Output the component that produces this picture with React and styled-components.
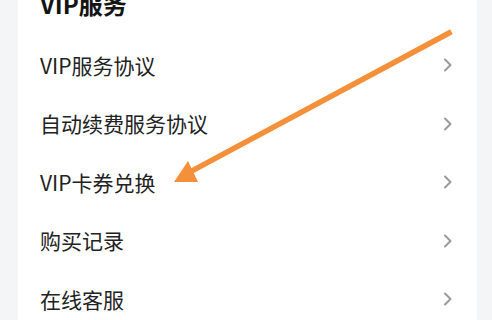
import React from "react";
import styled, { createGlobalStyle } from "styled-components";

const Global = createGlobalStyle`
  html, body { margin: 0; padding: 0; background: #f4f5f7; overflow: hidden; }
  body { font-family: "Noto Sans CJK SC", "Noto Sans", sans-serif; }
`;

const Page = styled.div`
  position: relative;
  width: 492px;
  height: 320px;
  overflow: hidden;
  background: #f4f5f7;
  padding: 0 15px 0 18px;
  box-sizing: border-box;
`;

const Card = styled.section`
  background: #ffffff;
  margin-top: -29px;
  display: flex;
  flex-direction: column;
`;

const Title = styled.h2`
  margin: 0;
  padding: 0 0 0 22px;
  height: 65px;
  display: flex;
  align-items: center;
  font-size: 24px;
  font-weight: 700;
  color: #141414;
  line-height: 1;
`;

const Row = styled.div`
  height: 58.5px;
  display: flex;
  align-items: center;
  justify-content: space-between;
  padding: 0 24px 0 22px;
`;

const Label = styled.span`
  font-size: 21px;
  color: #222222;
  line-height: 1;
`;

const Chevron = styled.svg`
  width: 10px;
  height: 14px;
  flex: none;
`;

const Overlay = styled.svg`
  position: absolute;
  left: 0;
  top: 0;
  width: 492px;
  height: 320px;
  pointer-events: none;
`;

const items = ["VIP服务协议", "自动续费服务协议", "VIP卡券兑换", "购买记录", "在线客服"];

export default function App() {
  return (
    <>
      <Global />
      <Page>
        <Card>
          <Title>VIP服务</Title>
          {items.map((t) => (
            <Row key={t}>
              <Label>{t}</Label>
              <Chevron viewBox="0 0 10 14">
                <path d="M2 1.5 L7.5 7 L2 12.5" fill="none" stroke="#9a9a9a" strokeWidth="2" strokeLinecap="round" strokeLinejoin="round" />
              </Chevron>
            </Row>
          ))}
        </Card>
        <Overlay viewBox="0 0 492 320">
          <line x1="449" y1="33" x2="186" y2="174" stroke="#f48f3a" strokeWidth="5.5" strokeLinecap="square" />
          <polygon points="174,182 188,161 198,182" fill="#f48f3a" />
        </Overlay>
      </Page>
    </>
  );
}
